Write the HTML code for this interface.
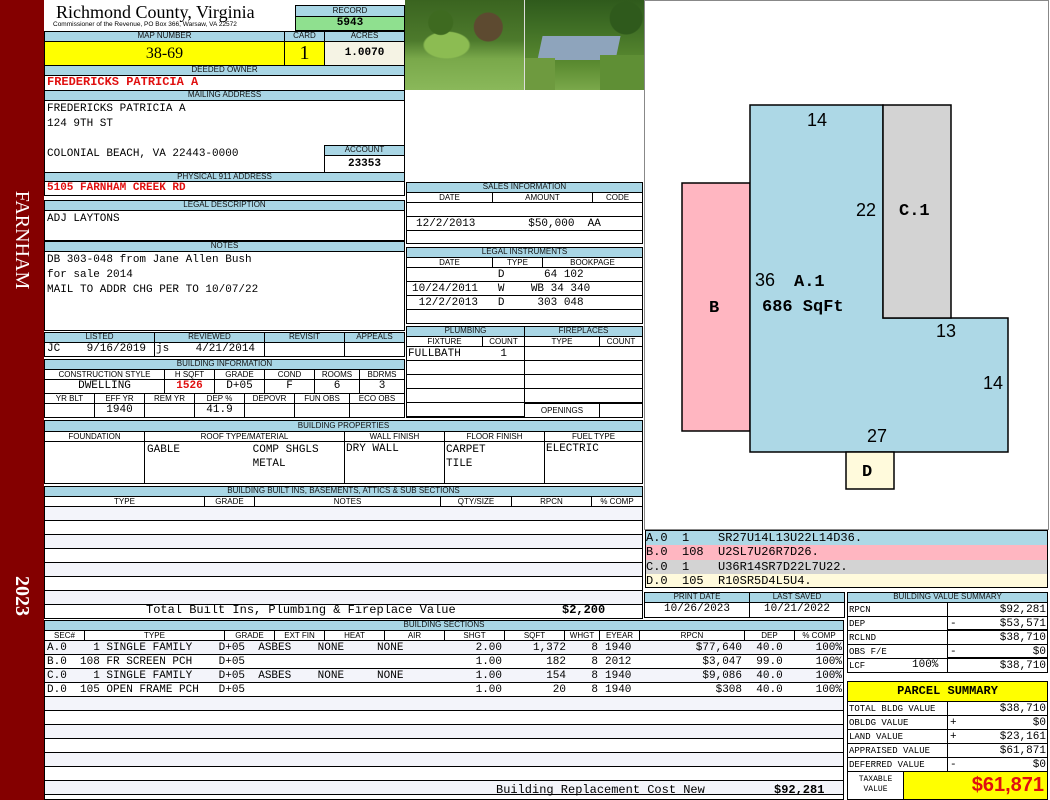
<!DOCTYPE html>
<html><head><meta charset="utf-8"><style>
*{margin:0;padding:0;box-sizing:border-box}
body{width:1050px;height:800px;background:#fff;position:relative;overflow:hidden;font-family:"Liberation Mono",monospace;}
div{position:absolute}
.bx{border:1px solid #000}
.h{background:#a9d6e5;border:1px solid #000;font:8px/8px "Liberation Sans",sans-serif;text-align:center;color:#111;white-space:nowrap;overflow:hidden}
.l{font:8px/9px "Liberation Sans",sans-serif;text-align:center;border:1px solid #000;white-space:nowrap;overflow:hidden}
.v{font-size:11px;line-height:13px;white-space:pre;color:#000}
.red{color:#e01010;font-weight:bold}
.r{text-align:right}
.c{text-align:center}
.ln{border-top:1px solid #000;height:0}
</style></head><body>
<!-- left red bar -->
<div style="left:0;top:0;width:44px;height:800px;background:#840000"></div>
<div style="left:22px;top:240px;width:0;height:0"><div style="left:-70px;top:-12px;width:140px;height:24px;transform:rotate(90deg);color:#fff;font:20px/24px 'Liberation Serif',serif;text-align:center">FARNHAM</div></div>
<div style="left:22px;top:596px;width:0;height:0"><div style="left:-40px;top:-12px;width:80px;height:24px;transform:rotate(90deg);color:#fff;font:bold 20px/24px 'Liberation Serif',serif;text-align:center">2023</div></div>

<!-- header -->
<div style="left:56px;top:2px;font:18px/20px 'Liberation Serif',serif">Richmond County, Virginia</div>
<div style="left:53px;top:21px;font:6.5px/7px 'Liberation Sans',sans-serif;white-space:nowrap">Commissioner of the Revenue, PO Box 366, Warsaw, VA 22572</div>
<div class="h" style="left:295px;top:5px;width:110px;height:12px;line-height:10px">RECORD</div>
<div class="bx v c" style="left:295px;top:16px;width:110px;height:15px;background:#8fe08f;font-weight:bold">5943</div>
<div class="h" style="left:44px;top:31px;width:241px;height:11px">MAP NUMBER</div>
<div class="h" style="left:284px;top:31px;width:41px;height:11px">CARD</div>
<div class="h" style="left:324px;top:31px;width:81px;height:11px">ACRES</div>
<div class="bx c" style="left:44px;top:41px;width:241px;height:25px;background:#ffff00;font:16px/23px 'Liberation Serif',serif">38-69</div>
<div class="bx c" style="left:284px;top:41px;width:41px;height:25px;background:#ffff00;font:20px/23px 'Liberation Serif',serif">1</div>
<div class="bx v c" style="left:324px;top:41px;width:81px;height:25px;background:#f5f3e4;line-height:23px;font-weight:bold">1.0070</div>
<div class="h" style="left:44px;top:65px;width:361px;height:11px">DEEDED OWNER</div>
<div class="bx v red" style="left:44px;top:75px;width:361px;height:16px;padding-left:2px;font-size:12px">FREDERICKS PATRICIA A</div>
<div class="h" style="left:44px;top:90px;width:361px;height:11px">MAILING ADDRESS</div>
<div class="bx" style="left:44px;top:100px;width:361px;height:73px"></div>
<div class="v" style="left:47px;top:102px;line-height:15px">FREDERICKS PATRICIA A
124 9TH ST

COLONIAL BEACH, VA 22443-0000</div>
<div class="h" style="left:324px;top:145px;width:81px;height:11px">ACCOUNT</div>
<div class="bx v c" style="left:324px;top:155px;width:81px;height:18px;font-weight:bold;line-height:16px">23353</div>
<div class="h" style="left:44px;top:172px;width:361px;height:10px;line-height:8px">PHYSICAL 911 ADDRESS</div>
<div class="bx v red" style="left:44px;top:181px;width:361px;height:15px;padding-left:2px">5105 FARNHAM CREEK RD</div>
<div class="h" style="left:44px;top:200px;width:361px;height:11px">LEGAL DESCRIPTION</div>
<div class="bx v" style="left:44px;top:210px;width:361px;height:31px;padding:2px">ADJ LAYTONS</div>
<div class="h" style="left:44px;top:241px;width:361px;height:11px">NOTES</div>
<div class="bx v" style="left:44px;top:251px;width:361px;height:80px;padding:1px 2px;line-height:15px">DB 303-048 from Jane Allen Bush
for sale 2014
MAIL TO ADDR CHG PER TO 10/07/22</div>

<!-- listed -->
<div class="h" style="left:44px;top:332px;width:111px;height:11px">LISTED</div>
<div class="h" style="left:154px;top:332px;width:111px;height:11px">REVIEWED</div>
<div class="h" style="left:264px;top:332px;width:81px;height:11px">REVISIT</div>
<div class="h" style="left:344px;top:332px;width:61px;height:11px">APPEALS</div>
<div class="bx v" style="left:44px;top:342px;width:111px;height:15px;padding-left:2px">JC    9/16/2019</div>
<div class="bx v" style="left:154px;top:342px;width:111px;height:15px;padding-left:1px">js    4/21/2014</div>
<div class="bx" style="left:264px;top:342px;width:81px;height:15px"></div>
<div class="bx" style="left:344px;top:342px;width:61px;height:15px"></div>

<!-- building info -->
<div class="h" style="left:44px;top:359px;width:361px;height:11px">BUILDING INFORMATION</div>
<div class="l" style="left:44px;top:369px;width:121px;height:11px">CONSTRUCTION STYLE</div>
<div class="l" style="left:164px;top:369px;width:51px;height:11px">H SQFT</div>
<div class="l" style="left:214px;top:369px;width:51px;height:11px">GRADE</div>
<div class="l" style="left:264px;top:369px;width:51px;height:11px">COND</div>
<div class="l" style="left:314px;top:369px;width:46px;height:11px">ROOMS</div>
<div class="l" style="left:359px;top:369px;width:46px;height:11px">BDRMS</div>
<div class="bx v c" style="left:44px;top:379px;width:121px;height:15px">DWELLING</div>
<div class="bx v c red" style="left:164px;top:379px;width:51px;height:15px">1526</div>
<div class="bx v c" style="left:214px;top:379px;width:51px;height:15px">D+05</div>
<div class="bx v c" style="left:264px;top:379px;width:51px;height:15px">F</div>
<div class="bx v c" style="left:314px;top:379px;width:46px;height:15px">6</div>
<div class="bx v c" style="left:359px;top:379px;width:46px;height:15px">3</div>
<div class="l" style="left:44px;top:393px;width:51px;height:11px">YR BLT</div>
<div class="l" style="left:94px;top:393px;width:51px;height:11px">EFF YR</div>
<div class="l" style="left:144px;top:393px;width:51px;height:11px">REM YR</div>
<div class="l" style="left:194px;top:393px;width:51px;height:11px">DEP %</div>
<div class="l" style="left:244px;top:393px;width:51px;height:11px">DEPOVR</div>
<div class="l" style="left:294px;top:393px;width:56px;height:11px">FUN OBS</div>
<div class="l" style="left:349px;top:393px;width:56px;height:11px">ECO OBS</div>
<div class="bx" style="left:44px;top:403px;width:51px;height:15px"></div>
<div class="bx v c" style="left:94px;top:403px;width:51px;height:15px">1940</div>
<div class="bx" style="left:144px;top:403px;width:51px;height:15px"></div>
<div class="bx v c" style="left:194px;top:403px;width:51px;height:15px">41.9</div>
<div class="bx" style="left:244px;top:403px;width:51px;height:15px"></div>
<div class="bx" style="left:294px;top:403px;width:56px;height:15px"></div>
<div class="bx" style="left:349px;top:403px;width:56px;height:15px"></div>

<!-- building properties -->
<div class="h" style="left:44px;top:420px;width:599px;height:12px;line-height:10px">BUILDING PROPERTIES</div>
<div class="l" style="left:44px;top:431px;width:101px;height:11px">FOUNDATION</div>
<div class="l" style="left:144px;top:431px;width:201px;height:11px">ROOF TYPE/MATERIAL</div>
<div class="l" style="left:344px;top:431px;width:101px;height:11px">WALL FINISH</div>
<div class="l" style="left:444px;top:431px;width:101px;height:11px">FLOOR FINISH</div>
<div class="l" style="left:544px;top:431px;width:99px;height:11px">FUEL TYPE</div>
<div class="bx" style="left:44px;top:441px;width:101px;height:43px"></div>
<div class="bx v" style="left:144px;top:441px;width:201px;height:43px;padding:1px 2px;line-height:14px">GABLE           COMP SHGLS
                METAL</div>
<div class="bx v" style="left:344px;top:441px;width:101px;height:43px;padding:1px 1px">DRY WALL</div>
<div class="bx v" style="left:444px;top:441px;width:101px;height:43px;padding:1px 1px;line-height:14px">CARPET
TILE</div>
<div class="bx v" style="left:544px;top:441px;width:99px;height:43px;padding:1px 1px">ELECTRIC</div>

<!-- built ins -->
<div class="h" style="left:44px;top:486px;width:599px;height:11px">BUILDING BUILT INS, BASEMENTS, ATTICS &amp; SUB SECTIONS</div>
<div class="l" style="left:44px;top:496px;width:161px;height:11px">TYPE</div>
<div class="l" style="left:204px;top:496px;width:51px;height:11px">GRADE</div>
<div class="l" style="left:254px;top:496px;width:187px;height:11px">NOTES</div>
<div class="l" style="left:440px;top:496px;width:72px;height:11px">QTY/SIZE</div>
<div class="l" style="left:511px;top:496px;width:81px;height:11px">RPCN</div>
<div class="l" style="left:591px;top:496px;width:52px;height:11px">% COMP</div>
<div class="bx" style="left:44px;top:506px;width:599px;height:113px;background:repeating-linear-gradient(#f3f4fa 0 13px,#000 13px 14px,#fff 14px 27px,#000 27px 28px)"></div>
<div class="v" style="left:146px;top:604px;font-size:12px">Total Built Ins, Plumbing &amp; Fireplace Value</div>
<div class="v" style="left:562px;top:604px;font-weight:bold;font-size:12px">$2,200</div>

<!-- building sections -->
<div class="h" style="left:44px;top:620px;width:800px;height:11px">BUILDING SECTIONS</div>
<div class="l" style="left:44px;top:630px;width:41px;height:11px">SEC#</div>
<div class="l" style="left:84px;top:630px;width:141px;height:11px">TYPE</div>
<div class="l" style="left:224px;top:630px;width:51px;height:11px">GRADE</div>
<div class="l" style="left:274px;top:630px;width:51px;height:11px">EXT FIN</div>
<div class="l" style="left:324px;top:630px;width:61px;height:11px">HEAT</div>
<div class="l" style="left:384px;top:630px;width:61px;height:11px">AIR</div>
<div class="l" style="left:444px;top:630px;width:61px;height:11px">SHGT</div>
<div class="l" style="left:504px;top:630px;width:61px;height:11px">SQFT</div>
<div class="l" style="left:564px;top:630px;width:36px;height:11px">WHGT</div>
<div class="l" style="left:599px;top:630px;width:41px;height:11px">EYEAR</div>
<div class="l" style="left:639px;top:630px;width:106px;height:11px">RPCN</div>
<div class="l" style="left:744px;top:630px;width:51px;height:11px">DEP</div>
<div class="l" style="left:794px;top:630px;width:50px;height:11px">% COMP</div>
<div class="bx" style="left:44px;top:640px;width:800px;height:160px;background:repeating-linear-gradient(#f3f4fa 0 13px,#000 13px 14px,#fff 14px 27px,#000 27px 28px)"></div>
<div class="v" style="left:47px;top:641px;line-height:14px">A.0    1 SINGLE FAMILY    D+05  ASBES    NONE     NONE
B.0  108 FR SCREEN PCH    D+05
C.0    1 SINGLE FAMILY    D+05  ASBES    NONE     NONE
D.0  105 OPEN FRAME PCH   D+05</div>
<div class="v r" style="left:444px;top:641px;width:58px;line-height:14px">2.00
1.00
1.00
1.00</div>
<div class="v r" style="left:504px;top:641px;width:62px;line-height:14px">1,372
182
154
20</div>
<div class="v r" style="left:564px;top:641px;width:34px;line-height:14px">8
8
8
8</div>
<div class="v" style="left:605px;top:641px;line-height:14px">1940
2012
1940
1940</div>
<div class="v r" style="left:639px;top:641px;width:103px;line-height:14px">$77,640
$3,047
$9,086
$308</div>
<div class="v c" style="left:744px;top:641px;width:51px;line-height:14px">40.0
99.0
40.0
40.0</div>
<div class="v r" style="left:794px;top:641px;width:48px;line-height:14px">100%
100%
100%
100%</div>
<div class="v" style="left:496px;top:784px;font-size:12px">Building Replacement Cost New</div>
<div class="v" style="left:774px;top:784px;font-weight:bold;font-size:12px">$92,281</div>

<!-- photos -->
<div style="left:405px;top:0;width:119px;height:90px;background:radial-gradient(circle at 30% 25%,#3e6a20 0 12px,transparent 13px),radial-gradient(circle at 70% 30%,#5d4a30 0 14px,transparent 15px),radial-gradient(ellipse at 35% 50%,#8cbc52 0 22px,transparent 24px),linear-gradient(#3a6420 0,#4d7a2c 45%,#79a84a 65%,#8ab85a 100%)"></div>
<div style="left:525px;top:0;width:119px;height:90px;background:radial-gradient(circle at 85% 20%,#2f5a1c 0 16px,transparent 17px),linear-gradient(#2f5a1c 0,#3f6e25 30%,#5a8a30 70%,#7aa84a 100%)"></div>
<div style="left:540px;top:36px;width:78px;height:24px;background:#8ea4bc;transform:skewX(-12deg)"></div>
<div style="left:525px;top:58px;width:30px;height:32px;background:#6e9a3f"></div>
<div style="left:600px;top:55px;width:44px;height:35px;background:#5f8f35"></div>
<div style="left:524px;top:0;width:1px;height:90px;background:#ddd"></div>

<!-- sales info -->
<div class="h" style="left:406px;top:182px;width:237px;height:11px">SALES INFORMATION</div>
<div class="l" style="left:406px;top:192px;width:87px;height:11px">DATE</div>
<div class="l" style="left:492px;top:192px;width:101px;height:11px">AMOUNT</div>
<div class="l" style="left:592px;top:192px;width:51px;height:11px">CODE</div>
<div class="bx" style="left:406px;top:202px;width:237px;height:42px"></div>
<div class="ln" style="left:406px;top:216px;width:237px"></div>
<div class="ln" style="left:406px;top:230px;width:237px"></div>
<div class="v" style="left:416px;top:218px">12/2/2013        $50,000  AA</div>
<div class="h" style="left:406px;top:247px;width:237px;height:11px">LEGAL INSTRUMENTS</div>
<div class="l" style="left:406px;top:257px;width:87px;height:11px">DATE</div>
<div class="l" style="left:492px;top:257px;width:51px;height:11px">TYPE</div>
<div class="l" style="left:542px;top:257px;width:101px;height:11px">BOOKPAGE</div>
<div class="bx" style="left:406px;top:267px;width:237px;height:57px;background:repeating-linear-gradient(#fff 0 13px,#000 13px 14px)"></div>
<div class="v" style="left:412px;top:268px;line-height:14px">             D      64 102
10/24/2011   W    WB 34 340
 12/2/2013   D     303 048</div>

<!-- plumbing -->
<div class="h" style="left:406px;top:326px;width:119px;height:11px">PLUMBING</div>
<div class="h" style="left:524px;top:326px;width:119px;height:11px">FIREPLACES</div>
<div class="l" style="left:406px;top:336px;width:77px;height:11px">FIXTURE</div>
<div class="l" style="left:482px;top:336px;width:43px;height:11px">COUNT</div>
<div class="l" style="left:524px;top:336px;width:76px;height:11px">TYPE</div>
<div class="l" style="left:599px;top:336px;width:44px;height:11px">COUNT</div>
<div class="bx" style="left:406px;top:346px;width:119px;height:72px;background:repeating-linear-gradient(#fff 0 13px,#000 13px 14px)"></div>
<div class="bx" style="left:524px;top:346px;width:119px;height:72px;background:repeating-linear-gradient(#fff 0 13px,#000 13px 14px)"></div>
<div class="v" style="left:408px;top:348px">FULLBATH      1</div>
<div class="l" style="left:524px;top:403px;width:76px;height:15px;line-height:13px;background:#fff">OPENINGS</div>
<div class="bx" style="left:599px;top:403px;width:44px;height:15px;background:#fff"></div>

<!-- sketch -->
<div class="bx" style="left:644px;top:0;width:405px;height:530px;border-color:#888"></div>
<svg style="position:absolute;left:0;top:0" width="1050" height="530">
<rect x="682" y="183" width="68" height="248" fill="#ffb6c1" stroke="#000" stroke-width="1.5"/>
<polygon points="750,105 883,105 883,318 1008,318 1008,452 750,452" fill="#add8e6" stroke="#000" stroke-width="1.5"/>
<rect x="883" y="105" width="68" height="213" fill="#d3d3d3" stroke="#000" stroke-width="1.5"/>
<rect x="846" y="452" width="48" height="37" fill="#fffadc" stroke="#000" stroke-width="1.5"/>
<g font-family="Liberation Sans,sans-serif" font-size="18">
<text x="807" y="126">14</text><text x="856" y="216">22</text><text x="755" y="286">36</text>
<text x="936" y="337">13</text><text x="983" y="389">14</text><text x="867" y="442">27</text></g>
<g font-family="Liberation Mono,monospace" font-size="17" font-weight="bold">
<text x="899" y="215">C.1</text><text x="794" y="286">A.1</text><text x="762" y="311">686 SqFt</text>
<text x="709" y="312">B</text><text x="862" y="476">D</text></g>
</svg>
<!-- legend -->
<div class="v" style="left:645px;top:530px;width:403px;height:58px;border:1px solid #000;font-size:12px;line-height:14.3px;background:linear-gradient(#add8e6 0 14px,#ffb6c1 14px 29px,#d3d3d3 29px 43px,#fffadc 43px)">A.0  1    SR27U14L13U22L14D36.
B.0  108  U2SL7U26R7D26.
C.0  1    U36R14SR7D22L7U22.
D.0  105  R10SR5D4L5U4.</div>

<!-- print date -->
<div class="h" style="left:644px;top:592px;width:106px;height:11px">PRINT DATE</div>
<div class="h" style="left:749px;top:592px;width:96px;height:11px">LAST SAVED</div>
<div class="bx v c" style="left:644px;top:602px;width:106px;height:16px">10/26/2023</div>
<div class="bx v c" style="left:749px;top:602px;width:96px;height:16px">10/21/2022</div>

<!-- building value summary -->
<div class="h" style="left:847px;top:592px;width:201px;height:11px">BUILDING VALUE SUMMARY</div>
<div class="bx" style="left:847px;top:602px;width:101px;height:71px;background:repeating-linear-gradient(#fff 0 13px,#000 13px 14px)"></div>
<div class="bx" style="left:947px;top:602px;width:101px;height:71px;background:repeating-linear-gradient(#fff 0 13px,#000 13px 14px)"></div>
<div style="left:947px;top:629px;width:101px;height:2px;background:#000"></div>
<div style="left:947px;top:657px;width:101px;height:2px;background:#000"></div>
<div class="v" style="left:849px;top:603px;font-size:9px;line-height:14px">RPCN
DEP
RCLND
OBS F/E
LCF</div>
<div class="v" style="left:912px;top:659px;font-size:11px">100%</div>
<div class="v" style="left:950px;top:617px;line-height:14px">-

-</div>
<div class="v r" style="left:947px;top:603px;width:99px;line-height:14px">$92,281
$53,571
$38,710
$0
$38,710</div>

<!-- parcel summary -->
<div class="bx c" style="left:847px;top:681px;width:201px;height:21px;background:#ffff00;font:bold 12px/19px 'Liberation Mono',monospace">PARCEL SUMMARY</div>
<div class="bx" style="left:847px;top:701px;width:101px;height:71px;background:repeating-linear-gradient(#fff 0 13px,#000 13px 14px)"></div>
<div class="bx" style="left:947px;top:701px;width:101px;height:71px;background:repeating-linear-gradient(#fff 0 13px,#000 13px 14px)"></div>
<div class="v" style="left:849px;top:702px;font-size:9px;line-height:14px">TOTAL BLDG VALUE
OBLDG VALUE
LAND VALUE
APPRAISED VALUE
DEFERRED VALUE</div>
<div class="v" style="left:950px;top:716px;line-height:14px">+
+

-</div>
<div class="v r" style="left:947px;top:702px;width:99px;line-height:14px">$38,710
$0
$23,161
$61,871
$0</div>
<div class="bx v c" style="left:847px;top:771px;width:57px;height:29px;font-size:8px;line-height:10px;padding-top:3px">TAXABLE
VALUE</div>
<div class="bx r" style="left:903px;top:771px;width:145px;height:29px;background:#ffff00;color:#e01010;font:bold 20px/27px 'Liberation Sans',sans-serif;padding-right:3px">$61,871</div>
</body></html>
